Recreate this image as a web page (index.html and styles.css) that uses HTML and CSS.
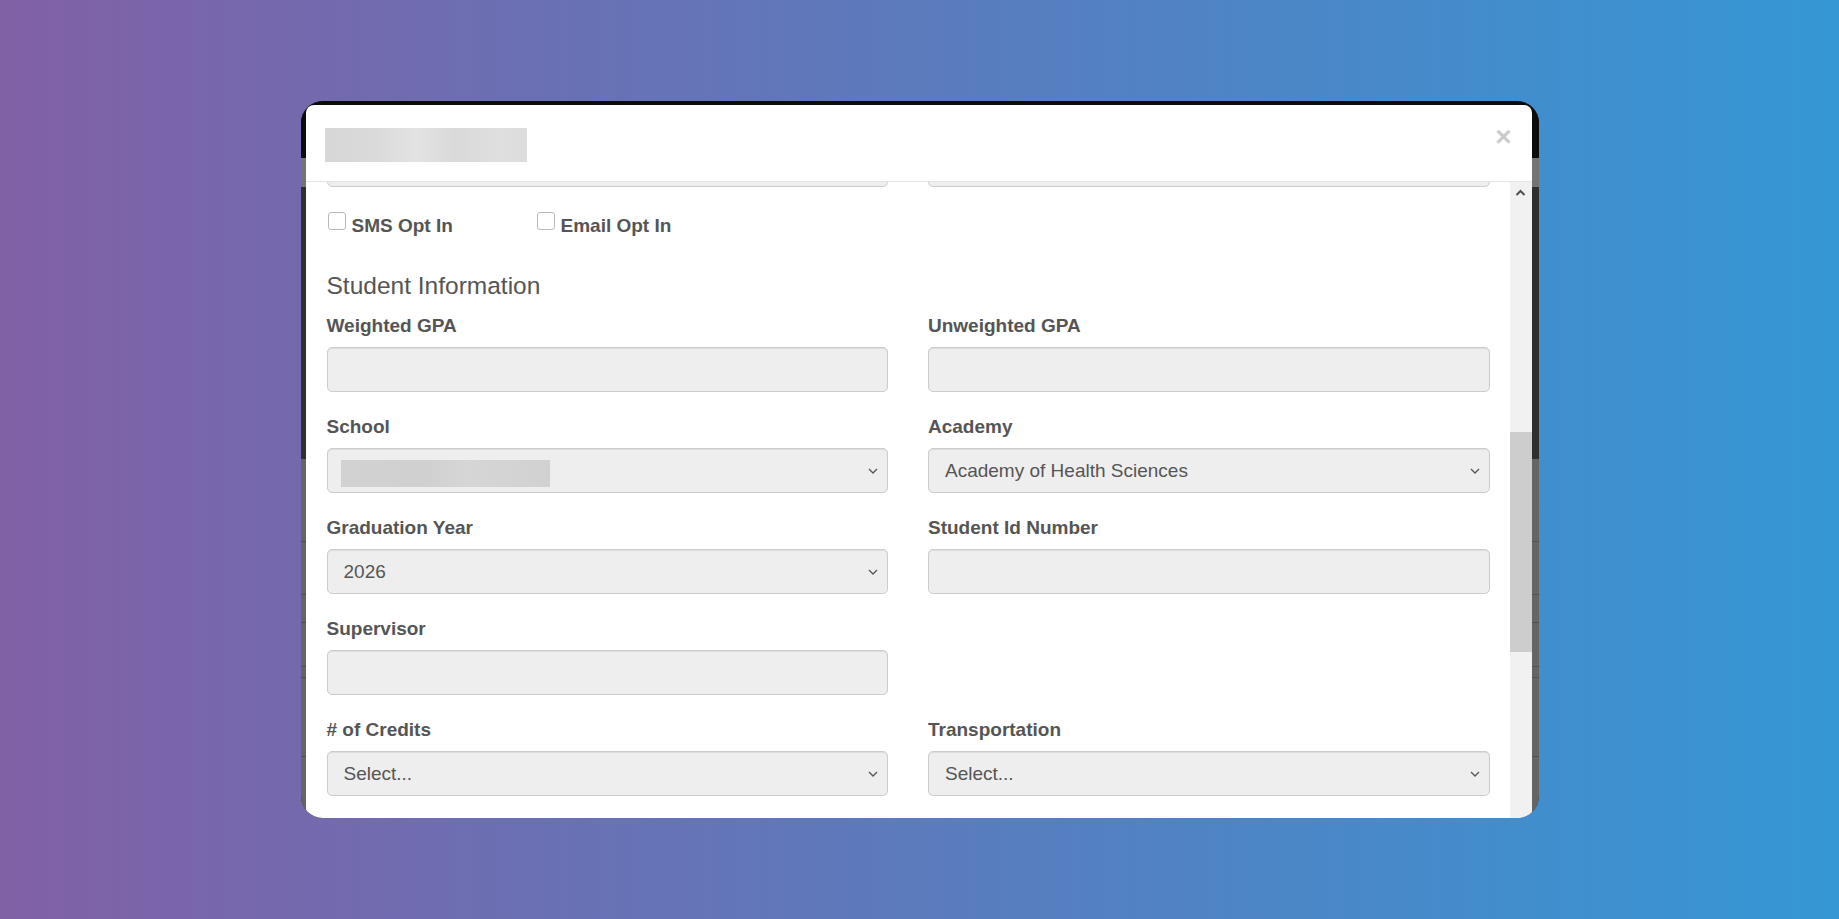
FILE: index.html
```html
<!DOCTYPE html>
<html lang="en">
<head>
    <meta charset="UTF-8">
    <meta name="viewport" content="width=device-width, initial-scale=1.0">
    <title>Edit Student</title>
    <link rel="stylesheet" href="styles.css">
</head>
<body>

    <div class="shot">
        <!-- page behind the modal, dimmed -->
        <div class="backdrop">
            <div class="bd-nav"></div>
            <div class="bd-bar"></div>
            <div class="bd-hero"></div>
            <div class="bd-table">
                <div class="bd-row"></div>
                <div class="bd-row"></div>
                <div class="bd-row"></div>
                <div class="bd-row"></div>
                <div class="bd-row"></div>
                <div class="bd-row"></div>
            </div>
        </div>

        <div class="modal">
            <div class="modal-header">
                <div class="modal-title redacted"></div>
                <button type="button" class="close">&times;</button>
            </div>

            <div class="modal-body">
                <div class="modal-scroll">
                    <div class="form-row first">
                        <div class="form-group">
                            <input type="text" class="form-control">
                        </div>
                        <div class="form-group">
                            <input type="text" class="form-control">
                        </div>
                    </div>

                    <div class="opt-ins">
                        <label class="checkbox"><input type="checkbox"> SMS Opt In</label>
                        <label class="checkbox"><input type="checkbox"> Email Opt In</label>
                    </div>

                    <h4 class="section-title">Student Information</h4>

                    <div class="form-row">
                        <div class="form-group">
                            <label>Weighted GPA</label>
                            <input type="text" class="form-control">
                        </div>
                        <div class="form-group">
                            <label>Unweighted GPA</label>
                            <input type="text" class="form-control">
                        </div>
                    </div>

                    <div class="form-row">
                        <div class="form-group">
                            <label>School</label>
                            <div class="select-wrap">
                                <select class="form-control"><option></option></select>
                                <span class="select-redacted"></span>
                                <svg class="caret" viewBox="0 0 10 6"><polyline points="1,1 5,5 9,1"/></svg>
                            </div>
                        </div>
                        <div class="form-group">
                            <label>Academy</label>
                            <div class="select-wrap">
                                <select class="form-control"><option>Academy of Health Sciences</option></select>
                                <svg class="caret" viewBox="0 0 10 6"><polyline points="1,1 5,5 9,1"/></svg>
                            </div>
                        </div>
                    </div>

                    <div class="form-row">
                        <div class="form-group">
                            <label>Graduation Year</label>
                            <div class="select-wrap">
                                <select class="form-control"><option>2026</option></select>
                                <svg class="caret" viewBox="0 0 10 6"><polyline points="1,1 5,5 9,1"/></svg>
                            </div>
                        </div>
                        <div class="form-group">
                            <label>Student Id Number</label>
                            <input type="text" class="form-control">
                        </div>
                    </div>

                    <div class="form-row">
                        <div class="form-group">
                            <label>Supervisor</label>
                            <input type="text" class="form-control">
                        </div>
                    </div>

                    <div class="form-row">
                        <div class="form-group">
                            <label># of Credits</label>
                            <div class="select-wrap">
                                <select class="form-control"><option>Select...</option></select>
                                <svg class="caret" viewBox="0 0 10 6"><polyline points="1,1 5,5 9,1"/></svg>
                            </div>
                        </div>
                        <div class="form-group">
                            <label>Transportation</label>
                            <div class="select-wrap">
                                <select class="form-control"><option>Select...</option></select>
                                <svg class="caret" viewBox="0 0 10 6"><polyline points="1,1 5,5 9,1"/></svg>
                            </div>
                        </div>
                    </div>
                </div>

                <div class="scrollbar">
                    <div class="scroll-btn">
                        <svg viewBox="0 0 11 7"><polyline points="1.5,6 5.5,2 9.5,6"/></svg>
                    </div>
                    <div class="scroll-thumb"></div>
                </div>
            </div>
        </div>
    </div>

</body>
</html>
```

FILE: styles.css
```css
:root {
    --text-color: #555;
    --border-color: #ccc;
    --field-bg: #eee;
    --white-color: #ffffff;
    --font-family: "Liberation Sans", Arial, Helvetica, sans-serif;
}
body, html {
    margin: 0;
    height: 100%;
}
body {
    display: flex;
    align-items: center;
    justify-content: center;
    background: linear-gradient(90deg, #8160a6 0%, #5b7bbd 50%, #3597d5 100%);
    font-family: var(--font-family);
    color: var(--text-color);
}

/* --- SCREENSHOT FRAME --- */
.shot {
    position: relative;
    width: 1238px;
    height: 717px;
    border-radius: 22px;
    overflow: hidden;
    background-color: #2f2f2f;
}
.backdrop {
    display: flex;
    flex-direction: column;
    height: 100%;
}
.bd-nav {
    height: 57px;
    background-color: #0c0c0c;
}
.bd-bar {
    height: 29px;
    background-color: #747474;
}
.bd-hero {
    height: 272px;
    background-color: #2f2f2f;
}
.bd-table {
    flex: 1;
    background-color: #656565;
}
.bd-row {
    box-sizing: border-box;
    border-bottom: 1px solid #515151;
}
.bd-row:nth-child(1) { height: 83px; }
.bd-row:nth-child(2) { height: 53px; }
.bd-row:nth-child(3) { height: 28px; }
.bd-row:nth-child(4) { height: 44px; }
.bd-row:nth-child(5) { height: 11px; }
.bd-row:nth-child(6) { height: 79px; }

/* --- MODAL --- */
.modal {
    position: absolute;
    top: 4px;
    left: 5px;
    width: 1226px;
    height: 740px;
    display: flex;
    flex-direction: column;
    background-color: var(--white-color);
    border-radius: 8px;
}
.modal-header {
    display: flex;
    justify-content: space-between;
    align-items: flex-start;
    padding: 23px 20px 19px 19px;
    border-bottom: 1px solid #e5e5e5;
}
.redacted {
    width: 202px;
    height: 34px;
    background: linear-gradient(90deg, #d7d7d7 0%, #dadada 25%, #e3e3e3 45%, #d9d9d9 65%, #dfdfdf 85%, #dcdcdc 100%);
}
.close {
    margin-top: -5px;
    padding: 0;
    border: 0;
    background: none;
    font-family: var(--font-family);
    font-size: 28px;
    font-weight: bold;
    line-height: 1;
    color: #000;
    opacity: 0.2;
    text-shadow: 0 1px 0 #fff;
}
.modal-body {
    flex: 1;
    display: flex;
    min-height: 0;
}
.modal-scroll {
    flex: 1;
    padding: 0 20px 0 21px;
    overflow: hidden;
}

/* --- FORM --- */
.form-row {
    display: grid;
    grid-template-columns: 1fr 1fr;
    column-gap: 40px;
}
.form-row.first {
    margin-top: -40px;
}
.form-group {
    margin-bottom: 21px;
}
.form-group label {
    display: block;
    margin-bottom: 8px;
    font-size: 19px;
    font-weight: bold;
    line-height: 27px;
}
.form-control {
    display: block;
    box-sizing: border-box;
    width: 100%;
    height: 45px;
    margin: 0;
    padding: 0 16px;
    font-family: var(--font-family);
    font-size: 19px;
    color: var(--text-color);
    background-color: var(--field-bg);
    border: 1px solid var(--border-color);
    border-radius: 5px;
    box-shadow: inset 0 1px 1px rgba(0, 0, 0, 0.075);
    appearance: none;
    outline: none;
}
.select-wrap {
    position: relative;
}
.caret {
    position: absolute;
    right: 10px;
    top: 50%;
    width: 10px;
    height: 6px;
    transform: translateY(-50%);
    fill: none;
    stroke: #555;
    stroke-width: 1.3;
}
.select-redacted {
    position: absolute;
    left: 14px;
    top: 12px;
    width: 209px;
    height: 27px;
    background: linear-gradient(90deg, #d2d2d2 0%, #d0d0d0 40%, #d6d6d6 60%, #d1d1d1 100%);
}

.opt-ins {
    display: flex;
    margin-top: 4px;
}
.checkbox {
    display: flex;
    align-items: flex-start;
    width: 209px;
    font-size: 19px;
    font-weight: bold;
    line-height: 27px;
}
.checkbox:last-child {
    width: auto;
}
.checkbox input {
    appearance: none;
    box-sizing: border-box;
    width: 18px;
    height: 18px;
    margin: 0 6px 0 1px;
    border: 1px solid #b9b9b9;
    border-radius: 3px;
    background-color: var(--white-color);
}
.section-title {
    margin: 34px 0 13px;
    font-size: 24.5px;
    font-weight: 500;
    line-height: 26.4px;
    color: var(--text-color);
}

/* --- SCROLLBAR --- */
.scrollbar {
    width: 22px;
    display: flex;
    flex-direction: column;
    background-color: #f1f1f1;
}
.scroll-btn {
    height: 20px;
    display: flex;
    align-items: center;
    justify-content: center;
}
.scroll-btn svg {
    width: 11px;
    height: 7px;
    fill: none;
    stroke: #505050;
    stroke-width: 2;
}
.scroll-thumb {
    margin-top: 230px;
    height: 220px;
    background-color: #cdcdcd;
}
```
